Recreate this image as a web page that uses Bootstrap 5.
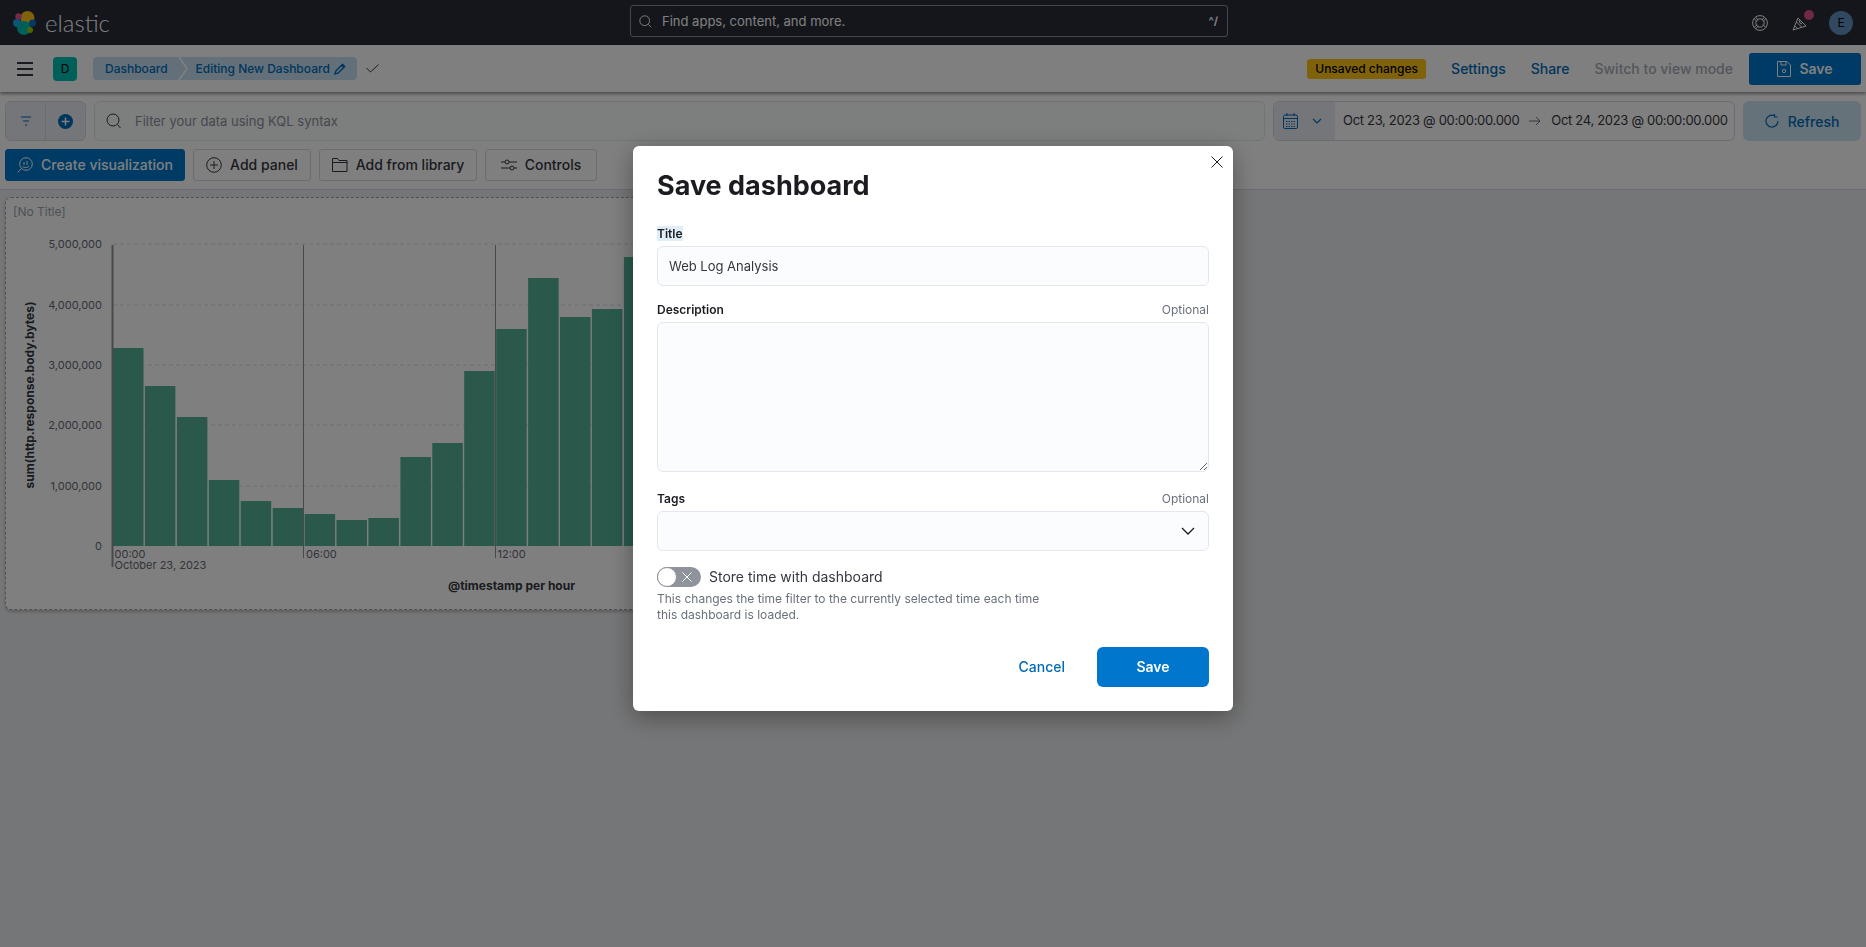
<!DOCTYPE html>
<html lang="en"><head><meta charset="utf-8"><title>Save dashboard</title>
<link href="https://cdn.jsdelivr.net/npm/bootstrap@5.3.0/dist/css/bootstrap.min.css" rel="stylesheet">
<style>
html,body{height:100%}
body{background:#ebecee;font-family:Inter,"Noto Sans",sans-serif;font-size:14px;color:#343741;overflow:hidden}
.kb-top{background:#fff;height:145px}
.kb-head{height:45px;background:#282c36;padding:0 13px;position:relative}
.kb-word{font-family:Lato,Inter,sans-serif;font-weight:300;font-size:24px;color:#fff;margin-left:9px;line-height:1}
.kb-search{position:absolute;left:630px;top:5px;width:598px;height:32px;border:1px solid #888e9c;border-radius:3px;padding:0 9px 0 8px;color:#fff;font-size:13px}
.kb-stxt{margin-left:10px;padding-top:2px}
.kb-kbd{font-size:11px;color:#fff;font-weight:700}
.kb-ava{width:24px;height:24px;border-radius:50%;background:#6092c0;color:#000;font-size:12px;margin-left:21px}
.kb-dot{position:absolute;width:10px;height:10px;border-radius:50%;background:#e04e90;top:-5px;right:-6px}
.kb-bar{height:47px;background:#fff;box-shadow:0 2px 3px rgba(0,0,0,.4);padding:0 5px 0 17px;position:relative}
.kb-tile{width:24px;height:24px;border-radius:4px;background:#00bfb3;color:#000;font-size:12px;margin-left:20px}
.kb-crumbs{height:23px;width:264px;margin-left:16px;border-radius:4px;overflow:hidden;font-size:12px;color:#006bb8;font-weight:500}
.kb-crumb1{background:#c6e1f5;width:93px;padding-left:12px;height:100%;flex:none;clip-path:polygon(0 0,calc(100% - 8px) 0,100% 50%,calc(100% - 8px) 100%,0 100%)}
.kb-crumb2{background:#c6e1f5;padding-left:15.5px;height:100%;flex:1;margin-left:-6px;white-space:nowrap;clip-path:polygon(0 0,100% 0,100% 100%,0 100%,8px 50%)}
.kb-chk{margin-left:9px}
.kb-badge-y{background:#fec514;color:#000;font-size:12px;font-weight:500;height:20px;border-radius:3px;width:119px;white-space:nowrap}
.kb-link{color:#006bb8;font-weight:500;text-decoration:none;margin-left:25px}
.kb-muted{color:#a5adb9;font-weight:500;margin-left:25px}
.kb-save{width:112px;height:32px;border:0;border-radius:3px;background:#07c;color:#fff;font-weight:600;font-size:14px;margin-left:16px}
.kb-query{height:40px;padding:0 5px;margin-top:9px;gap:8px}
.kb-fgroup{width:81px;height:40px;background:#e9edf3;border:1px solid #d3dae6;border-radius:6px;overflow:hidden}
.kb-fgroup>span{height:100%}
.kb-fgroup>span:first-child{width:40px;border-right:1px solid #d3dae6}
.kb-kql{flex:1;height:40px;border:1px solid #e4e7f0;border-radius:6px;background:#fbfcfd;padding:0 11px;color:#8b919c;font-size:13px}
.kb-ktxt{margin-left:13px;padding-top:2px}
.kb-date{width:462px;height:40px;flex:none;border:1px solid #d3dae6;border-radius:6px;overflow:hidden;background:#fff;color:#343741;white-space:nowrap;font-size:13px;letter-spacing:-.31px}
.kb-dleft{width:61px;flex:none;height:100%;background:#e9edf3;padding-left:9px;gap:14px;margin-right:8px}
.kb-arrow{margin:0 10px;flex:none}
.kb-refresh{width:118px;height:40px;border:0;border-radius:6px;background:#cce4f5;color:#006bb8;font-weight:500;gap:9px}
.kb-tools{padding:8px 5px;gap:8px;border-bottom:1px solid #d3dae6;height:49px}
.kb-btn{height:32px;border:1px solid #d3dae6;border-radius:3px;background:#fff;color:#343741;font-weight:500;gap:8px;padding:0 0 1px}
.kb-btn-p{background:#07c;border-color:#07c;color:#fff;width:180px}
.kb-w1{width:118px}.kb-w2{width:158px}.kb-w3{width:112px}
.kb-panel{margin:7px 0 0 5px;width:930px;height:413px;background:#fff;border:1px dashed #98a2b3;border-radius:6px;box-shadow:0 2px 3px rgba(0,0,0,.2)}
.kb-ptitle{font-size:12px;color:#98a2b3;position:absolute;left:7px;top:5px}
.kb-chart{display:block}
.kb-chart text{font-family:Inter,sans-serif;font-size:11px;fill:#646a77}
.kb-chart .kb-ax{font-size:12px;font-weight:700;fill:#343741}
.kb-dlg{max-width:600px;width:600px;margin:146px auto 0}
.kb-content{height:565px;border:0;border-radius:6px;box-shadow:0 6px 24px rgba(0,0,0,.35);padding:24px;color:#343741;position:relative}
.kb-h{font-size:27px;font-weight:700;color:#1a1c21;line-height:32px;margin:0 0 24px}
.kb-x{position:absolute;right:10px;top:10px;background:none;border:0;padding:0;line-height:0}
.kb-lab{font-size:12px;font-weight:600;color:#1a1c21;line-height:15px;height:15px}
.kb-hl{background:#e2eef7}
.kb-opt{font-size:12px;color:#69707d;font-weight:400}
.kb-ctl.form-control{height:40px;margin-top:5px;background:#fbfcfd;border:1px solid #e4e7f0;border-radius:6px;padding:0 11px;font-size:13px;color:#343741;box-shadow:none}
textarea.kb-ctl.form-control{height:151px;padding:11px;resize:vertical}
.kb-ctl.form-control.kb-selc{padding-right:13px}
.kb-row{margin-top:16px}
.kb-row2{margin-top:19px}
.kb-swrow{margin-top:15px}
.kb-sw{width:44px;height:20px;border-radius:10px;background:#8f939c;position:relative;flex:none}
.kb-thumb{position:absolute;left:0;top:0;width:20px;height:20px;background:#fff;border:1px solid #8f939c;border-radius:50%}
.kb-swx{position:absolute;left:25px;top:5px}
.kb-swl{margin-left:8px}
.kb-help{font-size:12px;line-height:16px;color:#69707d;max-width:400px;margin-top:4px}
.kb-foot{margin-top:24px}
.kb-cancel{color:#006bb8;font-weight:500;text-decoration:none;margin-right:32px;padding-bottom:2px}
.kb-primary{width:112px;height:40px;background:#07c;border:0;border-radius:6px;color:#fff;font-weight:600;font-size:14px;padding:0 0 2px}
</style></head>
<body>
<header class="kb-head d-flex align-items-center">
  <svg width="23" height="24" viewBox="0 0 23 24"><circle cx="14.500" cy="7" r="7" fill="#fec514"/><circle cx="5.500" cy="5.500" r="3.200" fill="#f04e98"/><circle cx="4" cy="12" r="4" fill="#1ba9f5"/><circle cx="11" cy="17" r="7" fill="#00bfb3"/><circle cx="19.500" cy="12" r="3.500" fill="#0077cc"/><circle cx="17" cy="19" r="3" fill="#93c90e"/></svg>
  <span class="kb-word">elastic</span>
  <div class="kb-search d-flex align-items-center">
    <svg width="13" height="13" viewBox="0 0 16 16" fill="none" stroke="#fff" stroke-width="1.200"><circle cx="7" cy="7" r="6"/><path d="M11.500 11.500l3.500 3.500"/></svg>
    <span class="flex-grow-1 kb-stxt">Find apps, content, and more.</span>
    <span class="kb-kbd">^/</span>
  </div>
  <div class="ms-auto d-flex align-items-center">
    <svg width="16" height="16" viewBox="0 0 16 16" fill="none" stroke="#fff"><circle cx="8" cy="8" r="7.400"/><circle cx="8" cy="8" r="4.200"/><path d="M2.300 3.700l2.800 2.800M3.700 2.300l2.800 2.800M13.700 3.700l-2.800 2.800M12.300 2.300l-2.800 2.800M2.300 12.300l2.800-2.800M3.700 13.700l2.800-2.800M13.700 12.300l-2.800-2.800"/></svg>
    <span class="position-relative d-inline-flex ms-4">
      <svg width="16" height="16" viewBox="0 0 16 16" fill="none" stroke="#fff"><path d="M1 15L6 3l8 8zM4.500 7l5 5M2.800 11l2.700 2.700M7 5l1 3 2 1"/></svg>
      <span class="kb-dot"></span>
    </span>
    <span class="kb-ava d-flex align-items-center justify-content-center">E</span>
  </div>
</header>

<div class="kb-top">
<div class="kb-bar d-flex align-items-center">
  <svg width="16" height="14" viewBox="0 0 16 14" stroke="#343741" stroke-width="2"><path d="M0 1h16M0 7h16M0 13h16"/></svg>
  <span class="kb-tile d-flex align-items-center justify-content-center">D</span>
  <div class="kb-crumbs d-flex align-items-stretch">
    <span class="kb-crumb1 d-flex align-items-center">Dashboard</span>
    <span class="kb-crumb2 d-flex align-items-center">Editing New Dashboard
      <svg class="ms-1" width="12" height="12" viewBox="0 0 12 12" fill="none" stroke="#006bb8" stroke-width="1.400"><path d="M1 11l.8-3L8.500 1.300l2.200 2.200L4 10.200zM7.500 2.500l2 2"/></svg>
    </span>
  </div>
  <svg class="kb-chk" width="13" height="9" viewBox="0 0 13 9" fill="none" stroke="#343741"><path d="M.5 4l4 4 8-7.500"/></svg>
  <div class="ms-auto d-flex align-items-center">
    <span class="kb-badge-y d-flex align-items-center justify-content-center">Unsaved changes</span>
    <a class="kb-link" href="#">Settings</a>
    <a class="kb-link" href="#">Share</a>
    <span class="kb-muted">Switch to view mode</span>
    <button class="kb-save d-flex align-items-center justify-content-center gap-2">
      <svg width="14" height="16" viewBox="0 0 14 16" fill="none" stroke="#fff"><path d="M.5.500h9.500l3.500 3.500v11.500H.5zM4 .5v3.500h5V.5"/><circle cx="7" cy="10" r="1.700"/></svg>Save</button>
  </div>
</div>

<div class="kb-query d-flex align-items-center">
  <div class="kb-fgroup d-flex">
    <span class="d-flex align-items-center justify-content-center"><svg width="12" height="10" viewBox="0 0 12 10" stroke="#006bb8" stroke-width="1.200"><path d="M1 1h10M3 5h6M5 9h2"/></svg></span>
    <span class="flex-grow-1 d-flex align-items-center justify-content-center"><svg width="15" height="15" viewBox="0 0 15 15"><circle cx="7.500" cy="7.500" r="7.500" fill="#006bb8"/><path d="M7.500 3.500v8M3.500 7.500h8" stroke="#fff" stroke-width="1.500"/></svg></span>
  </div>
  <div class="kb-kql d-flex align-items-center">
    <svg width="16" height="16" viewBox="0 0 16 16" fill="none" stroke="#343741"><circle cx="7" cy="7" r="6"/><path d="M11.500 11.500l3 3.500"/></svg>
    <span class="kb-ktxt">Filter your data using KQL syntax</span>
  </div>
  <div class="kb-date d-flex align-items-center">
    <div class="kb-dleft d-flex align-items-center">
      <svg width="15" height="16" viewBox="0 0 15 16" fill="none" stroke="#006bb8"><rect x=".5" y="2" width="14" height="13.500" rx="1.500"/><path d="M.5 5.500h14M4 0v3M11 0v3"/><path d="M3 8.500h9M3 11h9M3 13.500h9" stroke-dasharray="1.500 1"/></svg>
      <svg width="10" height="6" viewBox="0 0 10 6" fill="none" stroke="#006bb8" stroke-width="1.200"><path d="M1 1l4 4 4-4"/></svg>
    </div>
    <span>Oct 23, 2023 @ 00:00:00.000</span>
    <svg class="kb-arrow" width="12" height="10" viewBox="0 0 12 10" fill="none" stroke="#69707d"><path d="M0 5h11M7 1l4 4-4 4"/></svg>
    <span>Oct 24, 2023 @ 00:00:00.000</span>
  </div>
  <button class="kb-refresh d-flex align-items-center justify-content-center">
    <svg width="14" height="14" viewBox="0 0 14 14" fill="none" stroke="#006bb8" stroke-width="1.200"><path d="M9.500 1.600A6 6 0 1 0 13 7M9.500 0v3h3"/></svg>Refresh</button>
</div>

<div class="kb-tools d-flex align-items-center">
  <button class="kb-btn kb-btn-p d-flex align-items-center justify-content-center">
    <svg width="16" height="16" viewBox="0 0 16 16" fill="none" stroke="#fff"><circle cx="9" cy="7" r="6.300"/><path d="M.7 15.300l3.800-3.800M7 5v3M10 4v4M5.500 9.500c1.200 1.500 5 1.500 6.500-.5"/></svg>Create visualization</button>
  <button class="kb-btn kb-w1 d-flex align-items-center justify-content-center">
    <svg width="16" height="16" viewBox="0 0 16 16" fill="none" stroke="#343741"><circle cx="8" cy="8" r="7.300"/><path d="M8 4v8M4 8h8"/></svg>Add panel</button>
  <button class="kb-btn kb-w2 d-flex align-items-center justify-content-center">
    <svg width="16" height="14" viewBox="0 0 16 14" fill="none" stroke="#343741"><path d="M.5 13.500V1a.5.500 0 0 1 .5-.5h4.500l1.500 2h8v11zM.5 4.500h15"/></svg>Add from library</button>
  <button class="kb-btn kb-w3 d-flex align-items-center justify-content-center">
    <svg width="16" height="12" viewBox="0 0 16 12" fill="none" stroke="#343741"><path d="M0 3h4M8 3h8M0 9h9M13 9h3"/><circle cx="6" cy="3" r="2"/><circle cx="11" cy="9" r="2"/></svg>Controls</button>
</div>
</div>

<div class="kb-panel position-relative">
  <span class="kb-ptitle">[No Title]</span>
  <svg class="kb-chart" width="928" height="411" viewBox="6 198 928 411">
    <g stroke="#d3dae6" stroke-dasharray="4 3"><path d="M113 244H930M113 305H930M113 365H930M113 425H930M113 486H930"/></g>
    <g fill="#54b399">
      <rect x="113" y="348" width="30.500" height="198"/><rect x="144.900" y="386" width="30.500" height="160"/><rect x="176.900" y="417" width="30.500" height="129"/><rect x="208.800" y="480" width="30.500" height="66"/><rect x="240.700" y="501" width="30.500" height="45"/><rect x="272.700" y="508" width="30.500" height="38"/><rect x="304.600" y="514" width="30.500" height="32"/><rect x="336.500" y="520" width="30.500" height="26"/><rect x="368.400" y="518" width="30.500" height="28"/><rect x="400.400" y="457" width="30.500" height="89"/><rect x="432.300" y="443" width="30.500" height="103"/><rect x="464.200" y="371" width="30.500" height="175"/><rect x="496.200" y="329" width="30.500" height="217"/><rect x="528.100" y="278" width="30.500" height="268"/><rect x="560" y="317" width="30.500" height="229"/><rect x="591.900" y="309" width="30.500" height="237"/><rect x="623.900" y="257" width="30.500" height="289"/>
    </g>
    <path d="M112.500 245V567" stroke="#909399" stroke-width="2"/>
    <path d="M303.500 245V558M495.500 245V558" stroke="#909399" stroke-width="1"/>
    <g text-anchor="end">
      <text x="102" y="248">5,000,000</text><text x="102" y="309">4,000,000</text><text x="102" y="369">3,000,000</text><text x="102" y="429">2,000,000</text><text x="102" y="490">1,000,000</text><text x="102" y="550">0</text>
    </g>
    <text x="114.500" y="557.500">00:00</text><text x="114.500" y="568.500">October 23, 2023</text>
    <text x="306" y="557.500">06:00</text><text x="497.500" y="557.500">12:00</text>
    <text class="kb-ax" x="448" y="590">@timestamp per hour</text>
    <text class="kb-ax" transform="translate(34 395) rotate(-90)" text-anchor="middle">sum(http.response.body.bytes)</text>
  </svg>
</div>

<div class="modal-backdrop show"></div>
<div class="modal d-block" tabindex="-1">
  <div class="modal-dialog kb-dlg">
    <div class="modal-content kb-content">
      <button class="kb-x" aria-label="Close"><svg width="12" height="12" viewBox="0 0 12 12" stroke="#1a1c21"><path d="M.5.500l11 11M11.500.500l-11 11"/></svg></button>
      <h2 class="kb-h">Save dashboard</h2>
      <div class="kb-lab"><span class="kb-hl">Title</span></div>
      <input class="form-control kb-ctl" value="Web Log Analysis">
      <div class="kb-row d-flex justify-content-between kb-lab"><span>Description</span><span class="kb-opt">Optional</span></div>
      <textarea class="form-control kb-ctl"></textarea>
      <div class="kb-row2 d-flex justify-content-between kb-lab"><span>Tags</span><span class="kb-opt">Optional</span></div>
      <div class="form-control kb-ctl kb-selc d-flex align-items-center justify-content-end">
        <svg width="14" height="8" viewBox="0 0 14 8" fill="none" stroke="#1a1c21" stroke-width="1.300"><path d="M1 1l6 6 6-6"/></svg>
      </div>
      <div class="d-flex align-items-center kb-swrow">
        <span class="kb-sw"><span class="kb-thumb"></span>
          <svg class="kb-swx" width="10" height="10" viewBox="0 0 10 10" stroke="#fff"><path d="M.5.500l9 9M9.500.500l-9 9"/></svg></span>
        <span class="kb-swl">Store time with dashboard</span>
      </div>
      <div class="kb-help">This changes the time filter to the currently selected time each time this dashboard is loaded.</div>
      <div class="d-flex justify-content-end align-items-center kb-foot">
        <a class="kb-cancel" href="#">Cancel</a>
        <button class="kb-primary">Save</button>
      </div>
    </div>
  </div>
</div>
<script src="https://cdn.jsdelivr.net/npm/bootstrap@5.3.0/dist/js/bootstrap.bundle.min.js"></script>
</body></html>
